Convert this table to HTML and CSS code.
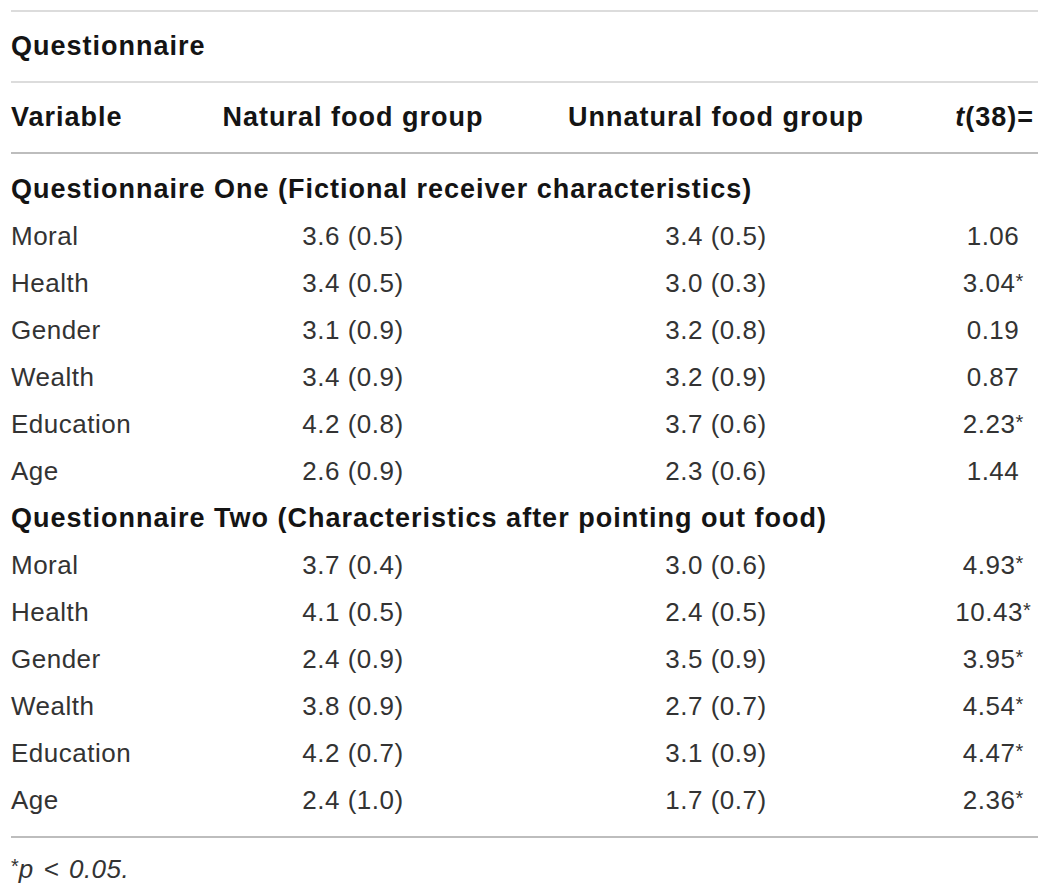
FILE: index.html
```html
<!DOCTYPE html>
<html lang="en">
<head>
<meta charset="utf-8">
<title>Questionnaire table</title>
<link rel="stylesheet" href="styles.css">
</head>
<body>
<div class="table">
  <div class="rule light"></div>
  <div class="caption-row">Questionnaire</div>
  <div class="rule light"></div>
  <div class="row head">
    <div class="c1">Variable</div>
    <div class="c2">Natural food group</div>
    <div class="c3">Unnatural food group</div>
    <div class="c4"><i>t</i>(38)=</div>
  </div>
  <div class="rule mid"></div>
  <div class="body">
    <div class="section">Questionnaire One (Fictional receiver characteristics)</div>
    <div class="row"><div class="c1">Moral</div><div class="c2">3.6 (0.5)</div><div class="c3">3.4 (0.5)</div><div class="c4">1.06</div></div>
    <div class="row"><div class="c1">Health</div><div class="c2">3.4 (0.5)</div><div class="c3">3.0 (0.3)</div><div class="c4">3.04<span class="ast">*</span></div></div>
    <div class="row"><div class="c1">Gender</div><div class="c2">3.1 (0.9)</div><div class="c3">3.2 (0.8)</div><div class="c4">0.19</div></div>
    <div class="row"><div class="c1">Wealth</div><div class="c2">3.4 (0.9)</div><div class="c3">3.2 (0.9)</div><div class="c4">0.87</div></div>
    <div class="row"><div class="c1">Education</div><div class="c2">4.2 (0.8)</div><div class="c3">3.7 (0.6)</div><div class="c4">2.23<span class="ast">*</span></div></div>
    <div class="row"><div class="c1">Age</div><div class="c2">2.6 (0.9)</div><div class="c3">2.3 (0.6)</div><div class="c4">1.44</div></div>
    <div class="section">Questionnaire Two (Characteristics after pointing out food)</div>
    <div class="row"><div class="c1">Moral</div><div class="c2">3.7 (0.4)</div><div class="c3">3.0 (0.6)</div><div class="c4">4.93<span class="ast">*</span></div></div>
    <div class="row"><div class="c1">Health</div><div class="c2">4.1 (0.5)</div><div class="c3">2.4 (0.5)</div><div class="c4">10.43<span class="ast">*</span></div></div>
    <div class="row"><div class="c1">Gender</div><div class="c2">2.4 (0.9)</div><div class="c3">3.5 (0.9)</div><div class="c4">3.95<span class="ast">*</span></div></div>
    <div class="row"><div class="c1">Wealth</div><div class="c2">3.8 (0.9)</div><div class="c3">2.7 (0.7)</div><div class="c4">4.54<span class="ast">*</span></div></div>
    <div class="row"><div class="c1">Education</div><div class="c2">4.2 (0.7)</div><div class="c3">3.1 (0.9)</div><div class="c4">4.47<span class="ast">*</span></div></div>
    <div class="row"><div class="c1">Age</div><div class="c2">2.4 (1.0)</div><div class="c3">1.7 (0.7)</div><div class="c4">2.36<span class="ast">*</span></div></div>
  </div>
  <div class="rule mid"></div>
  <div class="foot"><span class="ast">*</span><i>p</i> <i class="lt">&lt;</i> <i>0.05.</i></div>
</div>
</body>
</html>
```

FILE: styles.css
```css
html, body {
  margin: 0;
  padding: 0;
  background: #ffffff;
}

body {
  font-family: "Liberation Sans", Arial, sans-serif;
  color: #333333;
}

.table {
  margin: 10px 0 0 11px;
  width: 1027px;
}

.rule {
  height: 2px;
}

.rule.light {
  background: #dcdcdc;
}

.rule.mid {
  background: #bdbdbd;
}

.caption-row {
  height: 69px;
  line-height: 69px;
  font-size: 27px;
  font-weight: 700;
  letter-spacing: 1px;
  color: #141414;
}

.row {
  display: grid;
  grid-template-columns: 211px 262px 464px 1fr;
  align-items: center;
  height: 47px;
  font-size: 26px;
  letter-spacing: 0.5px;
  white-space: nowrap;
}

.row.head {
  height: 69px;
  font-size: 27px;
  font-weight: 700;
  letter-spacing: 1px;
  color: #141414;
}

.row.head .c4 {
  text-align: right;
  padding-right: 4px;
}

.c1 {
  text-align: left;
}

.c2, .c3, .c4 {
  text-align: center;
}

.body {
  padding: 12px 0;
}

.section {
  height: 47px;
  line-height: 47px;
  font-size: 27px;
  font-weight: 700;
  letter-spacing: 1px;
  color: #141414;
  white-space: nowrap;
}

.ast {
  font-size: 20px;
  vertical-align: 4px;
  letter-spacing: 0;
}

.foot {
  height: 56px;
  line-height: 56px;
  font-size: 26px;
  letter-spacing: 0.5px;
  word-spacing: 2px;
  color: #333333;
}

.foot .ast {
  vertical-align: 5px;
}
```
